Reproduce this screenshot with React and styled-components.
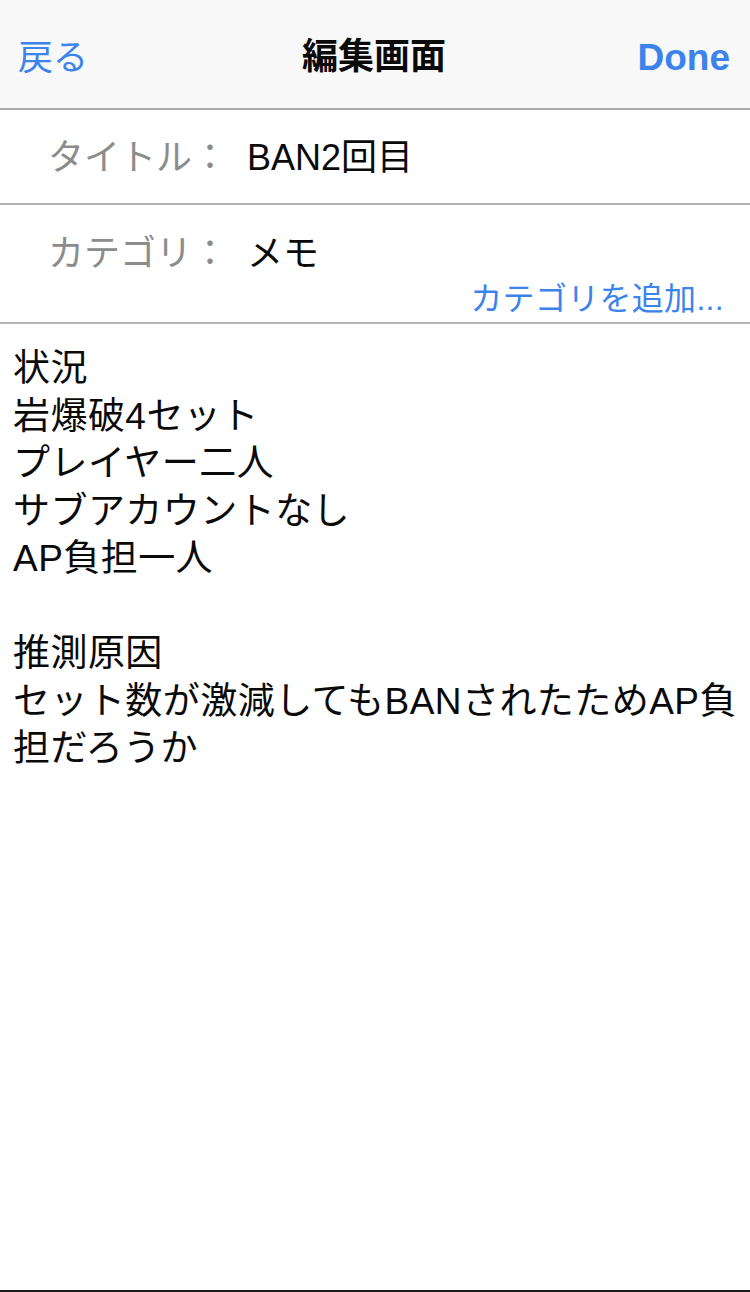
import React from 'react'
import styled, { createGlobalStyle } from 'styled-components'

const GlobalStyle = createGlobalStyle`
  html, body {
    margin: 0;
    padding: 0;
    background: #ffffff;
  }
  body {
    font-family: "Liberation Sans", "Noto Sans CJK JP", sans-serif;
    -webkit-font-smoothing: antialiased;
  }
`

const Screen = styled.div`
  width: 750px;
  min-height: 1292px;
  box-sizing: border-box;
  background: #ffffff;
  border-bottom: 2px solid #1a1a1a;
  display: flex;
  flex-direction: column;
`

const NavBar = styled.header`
  height: 110px;
  box-sizing: border-box;
  background: #f8f8f8;
  border-bottom: 2px solid #ababab;
  display: grid;
  grid-template-columns: 1fr auto 1fr;
  align-items: center;
  padding: 6px 20px 0 18px;
`

const NavButton = styled.span`
  font-size: ${p => (p.bold ? '37px' : '35px')};
  font-weight: ${p => (p.bold ? 700 : 400)};
  color: #3c83ec;
  justify-self: ${p => (p.right ? 'end' : 'start')};
  line-height: 1;
`

const NavTitle = styled.h1`
  margin: 0;
  font-size: 36px;
  font-weight: 700;
  color: #0a0a0a;
  line-height: 1;
`

const FieldRow = styled.section`
  border-bottom: 2px solid #b4b4b4;
  padding: ${p => p.pad};
  display: flex;
  flex-direction: column;
`

const FieldLine = styled.div`
  display: flex;
  align-items: center;
  height: 48px;
`

const Label = styled.span`
  width: 199px;
  padding-left: 48px;
  font-size: 36px;
  color: #8c8c8c;
  white-space: nowrap;
`

const Value = styled.span`
  font-size: 36px;
  color: #0a0a0a;
`

const AddLink = styled.span`
  align-self: flex-end;
  margin-right: 26px;
  margin-top: 5px;
  height: 40px;
  line-height: 40px;
  font-size: 32px;
  letter-spacing: 0.3px;
  color: #3c83ec;
`

const Body = styled.div`
  padding: 21px 4px 0 13px;
  font-size: 37px;
  line-height: 47.5px;
  letter-spacing: 0.45px;
  color: #0a0a0a;
  white-space: pre-wrap;
`

const memo = `状況
岩爆破4セット
プレイヤー二人
サブアカウントなし
AP負担一人

推測原因
セット数が激減してもBANされたためAP負担だろうか`

export default function App() {
  return (
    <>
      <GlobalStyle />
      <Screen>
        <NavBar>
          <NavButton>戻る</NavButton>
          <NavTitle>編集画面</NavTitle>
          <NavButton bold right>Done</NavButton>
        </NavBar>
        <FieldRow pad="20px 0 25px">
          <FieldLine>
            <Label>タイトル：</Label>
            <Value>BAN2回目</Value>
          </FieldLine>
        </FieldRow>
        <FieldRow pad="21px 0 3px">
          <FieldLine>
            <Label>カテゴリ：</Label>
            <Value>メモ</Value>
          </FieldLine>
          <AddLink>カテゴリを追加...</AddLink>
        </FieldRow>
        <Body>{memo}</Body>
      </Screen>
    </>
  )
}
